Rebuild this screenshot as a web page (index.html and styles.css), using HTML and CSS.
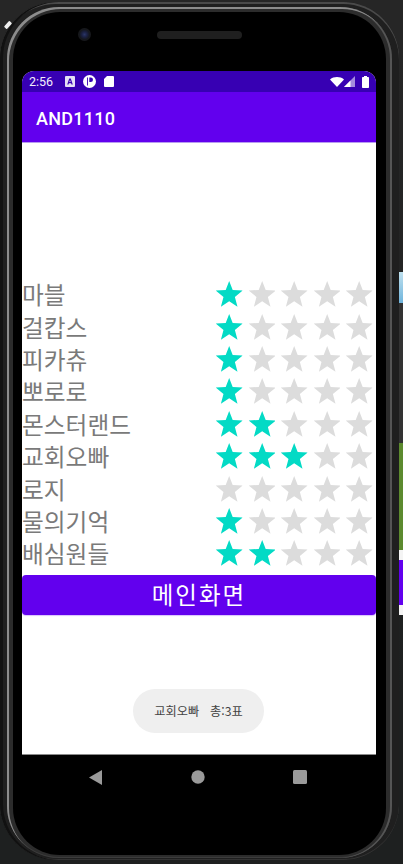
FILE: index.html
```html
<!DOCTYPE html>
<html lang="ko">
<head>
<meta charset="utf-8">
<title>AND1110</title>
<link rel="stylesheet" href="styles.css">
</head>
<body>
<svg class="defs" width="0" height="0" aria-hidden="true"><defs><symbol id="star" viewBox="0 0 27 26"><polygon points="13.5,0 17,8.9 27,9.6 19.2,15.9 21.8,25.8 13.5,20.3 5.2,25.8 7.8,15.9 0,9.6 10,8.9"/></symbol></defs></svg>
<div class="stage">
  <div class="phone">
    <span class="glint"></span>
    <div class="rim">
      <div class="body">
        <div class="earpiece">
          <span class="camera"></span>
          <span class="speaker"></span>
        </div>
        <main class="screen">
          <div class="status">
            <span class="time">2:56</span>
            <svg class="ic" width="10" height="11" viewBox="0 0 10 11"><path fill="#e4e0f4" d="M1 0h8a1 1 0 0 1 1 1v9a1 1 0 0 1-1 1H1a1 1 0 0 1-1-1V1a1 1 0 0 1 1-1z"/><path fill="#3700b3" d="M4.2 2.5h1.6l2 6H6.5l-.4-1.3H3.9l-.4 1.3H2.2zM4.3 6.1h1.4L5 3.9z"/></svg>
            <svg class="ic" width="13" height="13" viewBox="0 0 13 13"><circle cx="6.5" cy="6.5" r="6.5" fill="#fff"/><path fill="#3700b3" d="M5 2.5h-.9v8H5zM6.300 2.600h1.500a2.200 2.200 0 0 1 0 4.400H6.300z"/></svg>
            <svg class="ic" width="10" height="11" viewBox="0 0 10 11"><path fill="#fff" d="M3 0h6a1 1 0 0 1 1 1v9a1 1 0 0 1-1 1H1a1 1 0 0 1-1-1V3z"/></svg>
            <span class="status-gap"></span>
            <svg width="14" height="10" viewBox="0 0 14 10"><path fill="#fff" d="M0 2.400C3.900-.8 10.100-.8 14 2.400L7 10z"/></svg>
            <svg width="11" height="11" viewBox="0 0 11 11"><path fill="#fff" fill-opacity=".55" d="M11 0v11H0z"/><path fill="#fff" d="M6.500 4.500V11H0z"/></svg>
            <svg class="batt" width="7" height="12" viewBox="0 0 7 12"><path fill="#fff" d="M2 0h3v1h1.200a.8.8 0 0 1 .8.800v9.400a.8.800 0 0 1-.8.800H.8a.8.800 0 0 1-.8-.8V1.800A.8.800 0 0 1 .8 1H2z"/></svg>
          </div>
          <header class="appbar">AND1110</header>
          <section class="content">
            <ul class="list">
              <li class="row"><span class="name">마블</span><span class="stars"><svg class="star on"><use href="#star"/></svg><svg class="star"><use href="#star"/></svg><svg class="star"><use href="#star"/></svg><svg class="star"><use href="#star"/></svg><svg class="star"><use href="#star"/></svg></span></li>
              <li class="row"><span class="name">걸캅스</span><span class="stars"><svg class="star on"><use href="#star"/></svg><svg class="star"><use href="#star"/></svg><svg class="star"><use href="#star"/></svg><svg class="star"><use href="#star"/></svg><svg class="star"><use href="#star"/></svg></span></li>
              <li class="row"><span class="name">피카츄</span><span class="stars"><svg class="star on"><use href="#star"/></svg><svg class="star"><use href="#star"/></svg><svg class="star"><use href="#star"/></svg><svg class="star"><use href="#star"/></svg><svg class="star"><use href="#star"/></svg></span></li>
              <li class="row"><span class="name">뽀로로</span><span class="stars"><svg class="star on"><use href="#star"/></svg><svg class="star"><use href="#star"/></svg><svg class="star"><use href="#star"/></svg><svg class="star"><use href="#star"/></svg><svg class="star"><use href="#star"/></svg></span></li>
              <li class="row"><span class="name">몬스터랜드</span><span class="stars"><svg class="star on"><use href="#star"/></svg><svg class="star on"><use href="#star"/></svg><svg class="star"><use href="#star"/></svg><svg class="star"><use href="#star"/></svg><svg class="star"><use href="#star"/></svg></span></li>
              <li class="row"><span class="name">교회오빠</span><span class="stars"><svg class="star on"><use href="#star"/></svg><svg class="star on"><use href="#star"/></svg><svg class="star on"><use href="#star"/></svg><svg class="star"><use href="#star"/></svg><svg class="star"><use href="#star"/></svg></span></li>
              <li class="row"><span class="name">로지</span><span class="stars"><svg class="star"><use href="#star"/></svg><svg class="star"><use href="#star"/></svg><svg class="star"><use href="#star"/></svg><svg class="star"><use href="#star"/></svg><svg class="star"><use href="#star"/></svg></span></li>
              <li class="row"><span class="name">물의기억</span><span class="stars"><svg class="star on"><use href="#star"/></svg><svg class="star"><use href="#star"/></svg><svg class="star"><use href="#star"/></svg><svg class="star"><use href="#star"/></svg><svg class="star"><use href="#star"/></svg></span></li>
              <li class="row"><span class="name">배심원들</span><span class="stars"><svg class="star on"><use href="#star"/></svg><svg class="star on"><use href="#star"/></svg><svg class="star"><use href="#star"/></svg><svg class="star"><use href="#star"/></svg><svg class="star"><use href="#star"/></svg></span></li>
            </ul>
            <button class="main-btn" type="button">메인화면</button>
            <div class="toast">교회오빠  총:3표</div>
          </section>
        </main>
        <nav class="navbar">
          <svg width="13" height="15" viewBox="0 0 13 15"><path fill="#9a9a9a" d="M13 0v15L0 7.500z"/></svg>
          <svg width="14" height="14" viewBox="0 0 14 14"><circle cx="7" cy="7" r="6.700" fill="#9a9a9a"/></svg>
          <svg width="14" height="14" viewBox="0 0 14 14"><rect width="14" height="14" rx="1.500" fill="#9a9a9a"/></svg>
        </nav>
      </div>
    </div>
  </div>
  <aside class="peek">
    <div class="p-dark-a"></div>
    <div class="p-blue"></div>
    <div class="p-grey"></div>
    <div class="p-green"></div>
    <div class="p-white"></div>
    <div class="p-purple"></div>
    <div class="p-white"></div>
  </aside>
</div>
</body>
</html>
```

FILE: styles.css
```css
html, body { margin: 0; padding: 0; background: #1e2020; }
.defs { position: absolute; }
.stage {
  width: 403px;
  height: 864px;
  display: flex;
  overflow: hidden;
  background: linear-gradient(#262626 0, #262626 40px, #1e2020 700px);
  font-family: "Noto Sans CJK KR", "Noto Sans", sans-serif;
}
.phone {
  position: relative;
  flex: none;
  box-sizing: border-box;
  width: 399px;
  height: 858px;
  margin-top: 2px;
  padding: 5px 7px 2px 7px;
  border-radius: 56px;
  background: #1f1f1f;
  box-shadow: inset 3px 0 0 #111, inset 0 2px 0 #4a4a4a, inset 0 -1px 0 #333;
}
.glint {
  position: absolute;
  left: 4px;
  top: 21px;
  width: 8px;
  height: 4px;
  background: #eee;
  transform: rotate(-48deg);
  border-radius: 1px;
}
.rim {
  box-sizing: border-box;
  height: 100%;
  padding: 5px 6px 3px 6px;
  border-radius: 52px;
  background: #2c2c2c;
  box-shadow: inset 2px 2px 0 #8c8c8c, inset -2px 0 0 #555, inset 0 -1px 0 #3c3c3c;
}
.body {
  box-sizing: border-box;
  height: 100%;
  padding: 0 10px 0 9px;
  border-radius: 47px;
  background: #000;
}
.earpiece {
  box-sizing: border-box;
  height: 59px;
  padding: 0 0 15px 56px;
  display: flex;
  align-items: center;
  gap: 66px;
}
.camera {
  width: 13px;
  height: 13px;
  border-radius: 50%;
  background: radial-gradient(circle, #2a3566 0, #1a2040 30%, #15171c 55%, #1c1c1c 100%);
}
.speaker {
  width: 85px;
  height: 8px;
  margin-top: 2px;
  border-radius: 4px;
  background: #1f1f1f;
}
.screen {
  height: 684px;
  display: flex;
  flex-direction: column;
  overflow: hidden;
  border-radius: 12px 12px 0 0;
  background: #fff;
  border-bottom: 1px solid #8a8a8a;
  box-sizing: border-box;
}
.status {
  flex: none;
  height: 21px;
  box-sizing: border-box;
  padding: 0 7px;
  display: flex;
  align-items: center;
  background: #3700b3;
  color: #fff;
}
.time {
  width: 36px;
  font: 12.5px Roboto, sans-serif;
  color: #f2eefc;
}
.ic { margin-right: 8px; flex: none; }
.status-gap { flex: 1; }
.status svg:not(.ic) { flex: none; }
.batt { margin-left: 7px; margin-right: 0; }
.appbar {
  flex: none;
  box-sizing: border-box;
  height: 51px;
  padding: 2px 0 0 14px;
  display: flex;
  align-items: center;
  background: #6200ee;
  border-bottom: 1px solid #b79cf0;
  color: #fff;
  font: 500 18px Roboto, sans-serif;
  letter-spacing: 0.25px;
}
.content {
  position: relative;
  flex: 1;
  padding-top: 135px;
}
.list { list-style: none; margin: 0; padding: 0; }
.row {
  height: 32.4px;
  display: flex;
  align-items: center;
  justify-content: space-between;
}
.name {
  font-size: 23.7px;
  line-height: 32px;
  color: #7a7a7a;
}
.stars { display: flex; flex: none; width: 162px; margin-right: 0.6px; }
.star {
  width: 27px;
  height: 26px;
  padding: 0 2.7px;
  box-sizing: content-box;
  fill: #dcdcdc;
}
.star.on { fill: #03dac5; }
.main-btn {
  display: block;
  box-sizing: border-box;
  width: 100%;
  height: 40px;
  margin: 5px 0 0;
  padding: 0 0 2px 0;
  border: 0;
  border-radius: 4px;
  background: #6200ee;
  box-shadow: 0 1px 1px rgba(98, 0, 238, .25);
  color: #fff;
  font-family: "Noto Sans CJK KR", sans-serif;
  font-size: 23.5px;
  letter-spacing: 2px;
}
.toast {
  position: absolute;
  left: 111px;
  bottom: 21px;
  width: 131px;
  height: 44px;
  display: flex;
  align-items: center;
  justify-content: center;
  border-radius: 22px;
  background: #efefef;
  color: #444;
  font-size: 12.2px;
  word-spacing: 2px;
  white-space: pre;
}
.navbar {
  height: 44px;
  display: flex;
  align-items: center;
  padding: 0 69px 0 67px;
  justify-content: space-between;
}
.peek { flex: none; width: 4px; display: flex; flex-direction: column; }
.p-dark-a { height: 272px; }
.p-blue { height: 31px; background: linear-gradient(#bfe0ee, #6fb4dc); }
.p-grey { height: 140px; background: #333; }
.p-green { height: 107px; background: #5c8a2e; }
.p-white { height: 10px; background: #f4f4f4; }
.p-purple { height: 45px; background: #6200ee; }
```
